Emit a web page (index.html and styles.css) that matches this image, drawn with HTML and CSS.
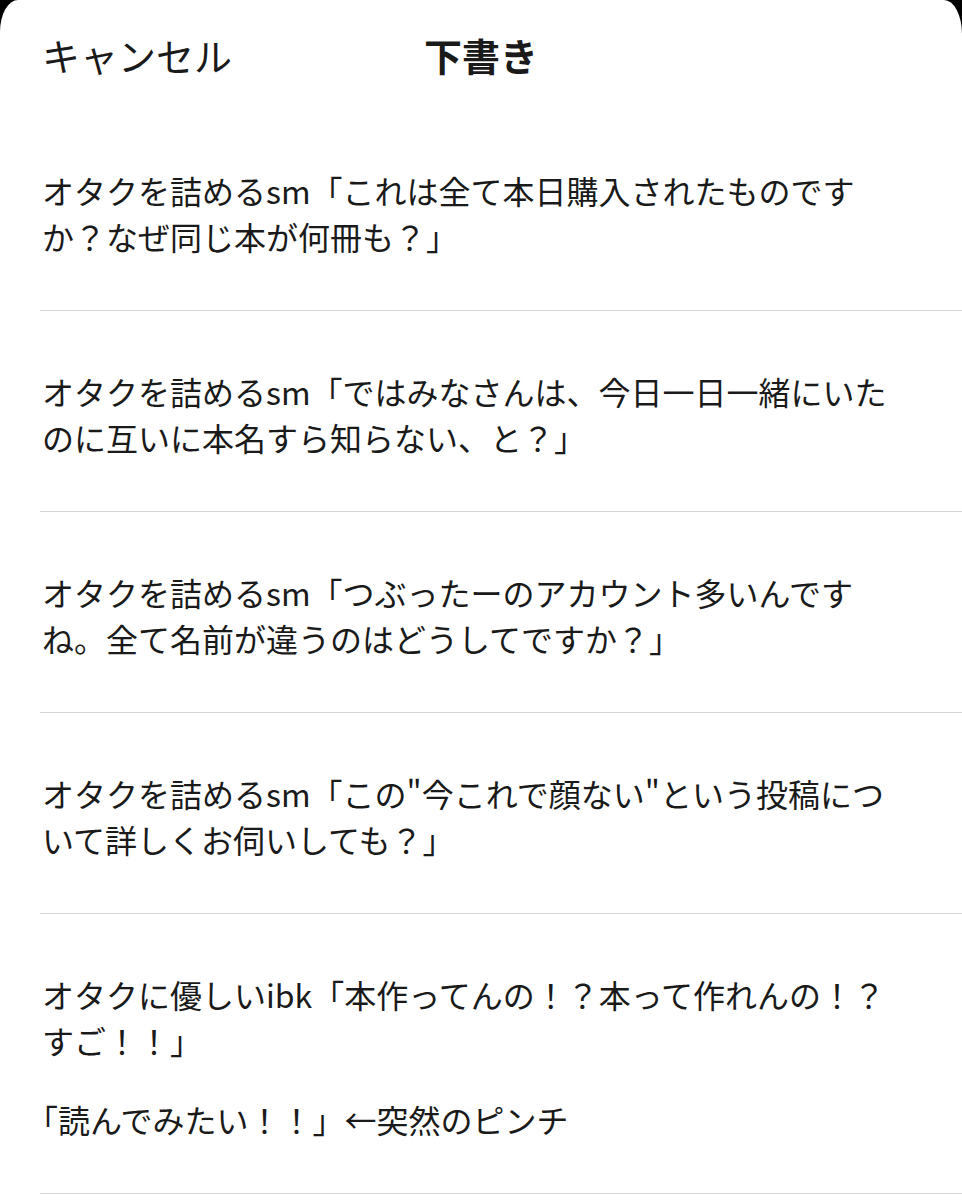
FILE: index.html
```html
<!DOCTYPE html>
<html lang="ja">
<head>
    <meta charset="UTF-8">
    <meta name="viewport" content="width=device-width, initial-scale=1.0">
    <title>下書き</title>
    <link rel="stylesheet" href="styles.css">
</head>
<body>
    <div class="sheet">
        <div class="header">
            <span class="cancel">キャンセル</span>
            <h1 class="title">下書き</h1>
            <span></span>
        </div>
        <ul class="drafts">
            <li class="draft">
                <p>オタクを詰めるsm「これは全て本日購入されたものですか？なぜ同じ本が何冊も？」</p>
            </li>
            <li class="draft">
                <p>オタクを詰めるsm「ではみなさんは、今日一日一緒にいたのに互いに本名すら知らない、と？」</p>
            </li>
            <li class="draft">
                <p>オタクを詰めるsm「つぶったーのアカウント多いんですね。全て名前が違うのはどうしてですか？」</p>
            </li>
            <li class="draft">
                <p>オタクを詰めるsm「この"今これで顔ない"という投稿について詳しくお伺いしても？」</p>
            </li>
            <li class="draft">
                <p>オタクに優しいibk「本作ってんの！？本って作れんの！？すご！！」</p>
                <p>「読んでみたい！！」←突然のピンチ</p>
            </li>
        </ul>
    </div>
</body>
</html>
```

FILE: styles.css
```css
body{
    margin: 0;
    padding: 0;
    background-color: #000;
    font-family: "Noto Sans CJK JP", "Noto Sans", sans-serif;
    color: #1a1a1a;
}
.sheet{
    background-color: #fff;
    min-height: 1200px;
    border-top-left-radius: 18px 32px;
    border-top-right-radius: 18px 34px;
}
.header{
    display: grid;
    grid-template-columns: 1fr auto 1fr;
    align-items: center;
    height: 110px;
    padding: 0 42px;
}
.cancel{
    font-size: 38px;
    line-height: 1;
}
.title{
    margin: 0;
    font-size: 38px;
    font-weight: 700;
    line-height: 1;
}

.drafts{
    list-style: none;
    margin: 0;
    padding: 0;
}
.draft{
    margin-left: 40px;
    padding: 57px 57px 51px 2px;
    border-bottom: 1px solid #d4d4d4;
    font-size: 32px;
    line-height: 46px;
    text-spacing-trim: trim-start;
}
.draft p{
    margin: 0;
}
.draft p + p{
    margin-top: 33px;
}
```
